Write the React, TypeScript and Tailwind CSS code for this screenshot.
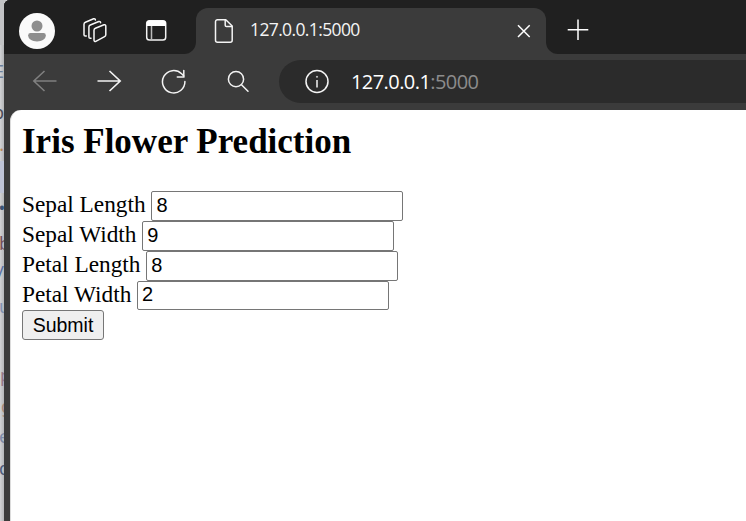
const fields = [
  { label: "Sepal Length", value: "8" },
  { label: "Sepal Width", value: "9" },
  { label: "Petal Length", value: "8" },
  { label: "Petal Width", value: "2" },
];

// Letters of the window behind, cut off by this window's left edge.
const fragments = [
  { text: "E", box: "h-[52px] justify-end", tone: "text-[#6c7f9b]" },
  { text: "p", box: "h-[30px] justify-end", tone: "text-[#4b4e58]" },
  { text: ".", box: "h-[34px] justify-end", tone: "text-[#b98a5c]" },
  { text: "", box: "h-[32px] bg-[#bfc4d6]", tone: "" },
  { text: "•", box: "h-[28px] justify-center", tone: "text-[#3c5575]" },
  { text: "b", box: "h-[44px] -ml-[1px] justify-start", tone: "text-[#75505c]" },
  { text: "/", box: "h-[14px] justify-end", tone: "text-[#5a72a5]" },
  { text: "u", box: "h-[54px] -ml-[1px] justify-start", tone: "text-[#8193b2]" },
  { text: "p", box: "h-[58px] pt-[26px] justify-start", tone: "text-[#94788a]" },
  { text: "g", box: "h-[29px] pl-[1px] justify-start", tone: "text-[#a58878]" },
  { text: "e", box: "h-[32px] -ml-[1px] justify-start", tone: "text-[#7d8ba8]" },
  { text: "d", box: "h-[32px] -ml-[1px] justify-start", tone: "text-[#4d5d7a]" },
];

function Backdrop() {
  return (
    <div className="flex h-full w-[4px] shrink-0 flex-col overflow-hidden bg-gradient-to-r from-[#d2d3d5] to-[#b4b5b7] font-['Noto_Sans',sans-serif] text-[18px]">
      <div className="h-[45px] shrink-0 bg-[#c2c3c5]" />
      {fragments.map((f, i) => (
        <div key={i} className={`flex shrink-0 items-center leading-none ${f.box} ${f.tone}`}>
          {f.text}
        </div>
      ))}
    </div>
  );
}

function TabStrip() {
  return (
    <div className="flex h-[54px] shrink-0 bg-[#3b3b3b]">
      <div className="flex w-[192px] shrink-0 bg-[#3b3b3b]">
        <div className="flex w-full items-start rounded-br-[12px] bg-[#202020]">
          <svg className="mt-[13px] ml-[15px] h-[36px] w-[36px]" viewBox="0 0 36 36">
            <circle cx="18" cy="18" r="18" fill="#fafafa" />
            <circle cx="18" cy="13" r="5.5" fill="#8e8e8e" />
            <path d="M11.5 20h13a2.3 2.3 0 0 1 2.3 2.3c0 4-4 6.2-8.8 6.2s-8.800-2.200-8.800-6.200A2.300 2.300 0 0 1 11.500 20z" fill="#8e8e8e" />
          </svg>
          <svg className="mt-[17px] ml-[26px] h-[27px] w-[27px]" viewBox="0 0 27 27" fill="none" stroke="#f8f8f8" strokeWidth="1.500" strokeLinejoin="round" strokeLinecap="round">
            <path d="M13 13.200a2.200 2.200 0 0 1 1.400-2l8.600-3.400a1.300 1.300 0 0 1 1.800 1.200v8.800a2.200 2.200 0 0 1-1.200 1.900l-8.800 4.700a1.300 1.300 0 0 1-1.800-1.100z" />
            <path d="M10 21.200H9.200a1.300 1.300 0 0 1-1.300-1.300V10a2.200 2.200 0 0 1 1.400-2l8.500-3.500a1.300 1.300 0 0 1 1.800 1.200" />
            <path d="M5.300 19H4.300a1.300 1.300 0 0 1-1.300-1.300V7.200a2.200 2.200 0 0 1 1.400-2l8.200-3.400a1.300 1.300 0 0 1 1.800 1.200" />
          </svg>
          <svg className="mt-[19px] ml-[37px] h-[23px] w-[23px]" viewBox="0 0 23 23" fill="none">
            <rect x="1.700" y="1.700" width="19" height="19.300" rx="2.800" stroke="#f2f2f2" strokeWidth="1.500" />
            <path d="M1.500 7V4.500a3 3 0 0 1 3-3h13.500a3 3 0 0 1 3 3V7z" fill="#fff" />
            <path d="M6.500 7v14" stroke="#bbb" strokeWidth="1.500" />
          </svg>
        </div>
      </div>
      <div className="w-[350px] shrink-0 bg-[#202020] pt-[8px]">
        <div className="flex h-[46px] items-start rounded-t-[12px] bg-[#3b3b3b]">
          <svg className="mt-[10px] ml-[18px] h-[26px] w-[20px]" viewBox="0 0 20 26" fill="none" stroke="#f4f4f4" strokeWidth="1.500" strokeLinejoin="round">
            <path d="M3.500 1.700h8.300L18.200 8v14.300a2 2 0 0 1-2 2H3.500a2 2 0 0 1-2-2V3.700a2 2 0 0 1 2-2z" />
            <path d="M11.200 1.700v5.500a1.300 1.300 0 0 0 1.300 1.300h5.700" />
          </svg>
          <span className="mt-[7px] ml-[16px] w-[264px] font-['Open_Sans','Noto_Sans',sans-serif] text-[17.500px] leading-[28px] tracking-[-0.630px] text-[#f4f4f4]">127.0.0.1:5000</span>
          <svg className="mt-[16px] ml-[3px] h-[14px] w-[14px] shrink-0" viewBox="0 0 14 14" stroke="#fff" strokeWidth="1.500">
            <path d="M1 1.300l11.700 11.700M12.700 1.300L1 13" />
          </svg>
        </div>
      </div>
      <div className="flex-1 rounded-bl-[12px] bg-[#202020] pt-[19px] pl-[21px]">
        <svg className="h-[22px] w-[22px]" viewBox="0 0 22 22" stroke="#fff" strokeWidth="1.500">
          <path d="M.7 10.800h20.600M11 .5v20.500" />
        </svg>
      </div>
    </div>
  );
}

function Toolbar() {
  return (
    <div className="flex h-[56px] shrink-0 items-start bg-[#3b3b3b]">
      <svg className="mt-[16px] ml-[28px] h-[22px] w-[25px]" viewBox="0 0 25 22" fill="none" stroke="#808080" strokeWidth="1.500">
        <path d="M12.500 1L1.800 11l10.700 10M2 11h22.500" />
      </svg>
      <svg className="mt-[16px] ml-[40px] h-[22px] w-[25px]" viewBox="0 0 25 22" fill="none" stroke="#f4f4f4" strokeWidth="1.600">
        <path d="M12.500 1l10.700 10-10.700 10M.5 11h22.500" />
      </svg>
      <svg className="mt-[15px] ml-[39px] h-[26px] w-[26px]" viewBox="0 0 26 26" fill="none" stroke="#f4f4f4" strokeWidth="1.500" strokeLinecap="round">
        <path d="M23.900 12.500A11.200 11.200 0 1 1 20.600 4.800L22.800 7" />
        <path d="M22.800 1.500V8h-6.500" />
      </svg>
      <svg className="mt-[16px] ml-[39px] h-[24px] w-[24px]" viewBox="0 0 24 24" fill="none" stroke="#f2f2f2" strokeWidth="1.500" strokeLinecap="round">
        <circle cx="10" cy="9.200" r="7.600" />
        <path d="M15.500 14.700l6.500 6.500" />
      </svg>
      <div className="mt-[6px] ml-[29px] flex h-[43px] flex-1 items-start rounded-l-full bg-[#2b2b2b]">
        <svg className="mt-[9px] ml-[26px] h-[25px] w-[25px]" viewBox="0 0 25 25" fill="none" stroke="#f4f4f4" strokeWidth="1.500">
          <circle cx="12" cy="12.500" r="11" />
          <path d="M12 11v7.500" />
          <circle cx="12" cy="7.800" r=".6" fill="#f4f4f4" strokeWidth=".6" />
        </svg>
        <span className="mt-[8px] ml-[21px] font-['Open_Sans','Noto_Sans',sans-serif] text-[20px] leading-[28px] tracking-[-0.570px] text-white">
          127.0.0.1<span className="text-[#8c8c8c]">:5000</span>
        </span>
      </div>
    </div>
  );
}

export default function App() {
  return (
    <div className="flex h-[521px] w-[746px] overflow-hidden bg-[#c6c7c9]">
      <Backdrop />
      <div className="flex min-w-0 flex-1 flex-col overflow-hidden rounded-tl-[6px] bg-[#3b3b3b]">
        <TabStrip />
        <Toolbar />
        <main className="ml-[6px] flex-1 rounded-tl-[11px] border-l border-[#dcdcdc] bg-white pl-[11px] font-['Liberation_Serif','Times_New_Roman',serif] text-[23.300px] text-black">
          <h2 className="pt-[11px] text-[35px] leading-[41px] font-bold">Iris Flower Prediction</h2>
          <form className="mt-[29px]" onSubmit={(e) => e.preventDefault()}>
            {fields.map((f) => (
              <div key={f.label} className="flex h-[30px] items-start nth-[4]:h-[29px]">
                <label className="leading-[27px] whitespace-pre">{f.label + " "}</label>
                <input
                  className="h-full w-[252px] rounded-[2px] border border-[#767676] bg-white px-[4px] pb-[2px] font-['Liberation_Sans',Arial,sans-serif] text-[20px] leading-[23px]"
                  defaultValue={f.value}
                  aria-label={f.label}
                />
              </div>
            ))}
            <button className="block h-[30px] w-[82px] rounded-[3px] border border-[#767676] bg-[#efefef] font-['Liberation_Sans',Arial,sans-serif] text-[19.500px] leading-[26px]">
              Submit
            </button>
          </form>
        </main>
      </div>
    </div>
  );
}
